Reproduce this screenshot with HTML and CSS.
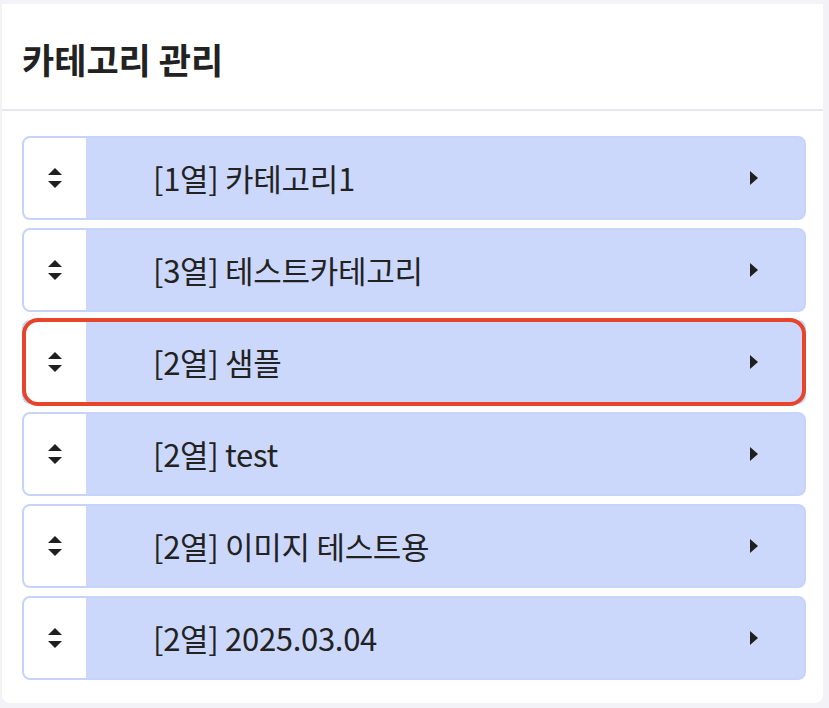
FILE: index.html
```html
<!DOCTYPE html>
<html>
	<head>
		<meta charset="utf-8" />
		<title>카테고리 관리</title>
		<link rel="stylesheet" href="styles.css">
	</head>

	<body>
		<div class="cate-box">
			<div class="cate-head">카테고리 관리</div>
			<div class="cate-list">
				<div class="cate-item">
					<span class="handle"><i class="up"></i><i class="down"></i></span>
					<span class="name">[1열] 카테고리1</span>
					<span class="arrow"></span>
				</div>
				<div class="cate-item">
					<span class="handle"><i class="up"></i><i class="down"></i></span>
					<span class="name">[3열] 테스트카테고리</span>
					<span class="arrow"></span>
				</div>
				<div class="cate-item on">
					<span class="handle"><i class="up"></i><i class="down"></i></span>
					<span class="name">[2열] 샘플</span>
					<span class="arrow"></span>
				</div>
				<div class="cate-item">
					<span class="handle"><i class="up"></i><i class="down"></i></span>
					<span class="name">[2열] test</span>
					<span class="arrow"></span>
				</div>
				<div class="cate-item">
					<span class="handle"><i class="up"></i><i class="down"></i></span>
					<span class="name">[2열] 이미지 테스트용</span>
					<span class="arrow"></span>
				</div>
				<div class="cate-item">
					<span class="handle"><i class="up"></i><i class="down"></i></span>
					<span class="name">[2열] 2025.03.04</span>
					<span class="arrow"></span>
				</div>
			</div>
		</div>
	</body>
</html>
```

FILE: styles.css
```css
* {
	padding: 0px;
	margin: 0px;
	box-sizing: border-box;
}
body {
	background-color: #f2f2f7;
	font-family: "Noto Sans CJK KR", "Noto Sans", sans-serif;
	color: #222;
}
.cate-box {
	width: 821px;
	height: 699px;
	margin: 4px 0 0 2px;
	background-color: #fff;
	border-radius: 0 0 8px 8px;
}
.cate-head {
	height: 107px;
	padding-left: 20px;
	line-height: 110px;
	font-size: 35px;
	font-weight: bold;
	color: #222;
	border-bottom: 2px solid #e6e6eb;
}
.cate-list {
	padding: 25px 17px 0 20px;
	display: flex;
	flex-direction: column;
	gap: 8px;
}
.cate-item {
	position: relative;
	height: 84px;
	display: flex;
	align-items: center;
	background-color: #ccd8fb;
	border: 2px solid #c6d3fa;
	border-radius: 8px;
	overflow: hidden;
}
.cate-item.on {
	overflow: visible;
}
/* 선택된 카테고리 테두리 */
.cate-item.on::after {
	content: "";
	position: absolute;
	left: -2px;
	right: -2px;
	top: -4px;
	bottom: -4px;
	border: 4px solid #e8442a;
	border-radius: 16px;
}
.handle {
	width: 62px;
	height: 100%;
	background-color: #fff;
	display: flex;
	flex-direction: column;
	align-items: center;
	justify-content: center;
	gap: 6px;
}
.cate-item.on .handle {
	border-radius: 6px 0 0 6px;
}
.handle i {
	display: block;
	width: 0;
	height: 0;
	border-left: 7px solid transparent;
	border-right: 7px solid transparent;
}
.handle .up {
	border-bottom: 7px solid #1f1f1f;
}
.handle .down {
	border-top: 7px solid #1f1f1f;
}
.name {
	flex: 1;
	padding-left: 67px;
	font-size: 31px;
	color: #222;
	line-height: 40px;
	letter-spacing: -0.3px;
}
.arrow {
	width: 0;
	height: 0;
	margin-right: 46px;
	border-top: 7px solid transparent;
	border-bottom: 7px solid transparent;
	border-left: 8px solid #1f1f1f;
}
```
